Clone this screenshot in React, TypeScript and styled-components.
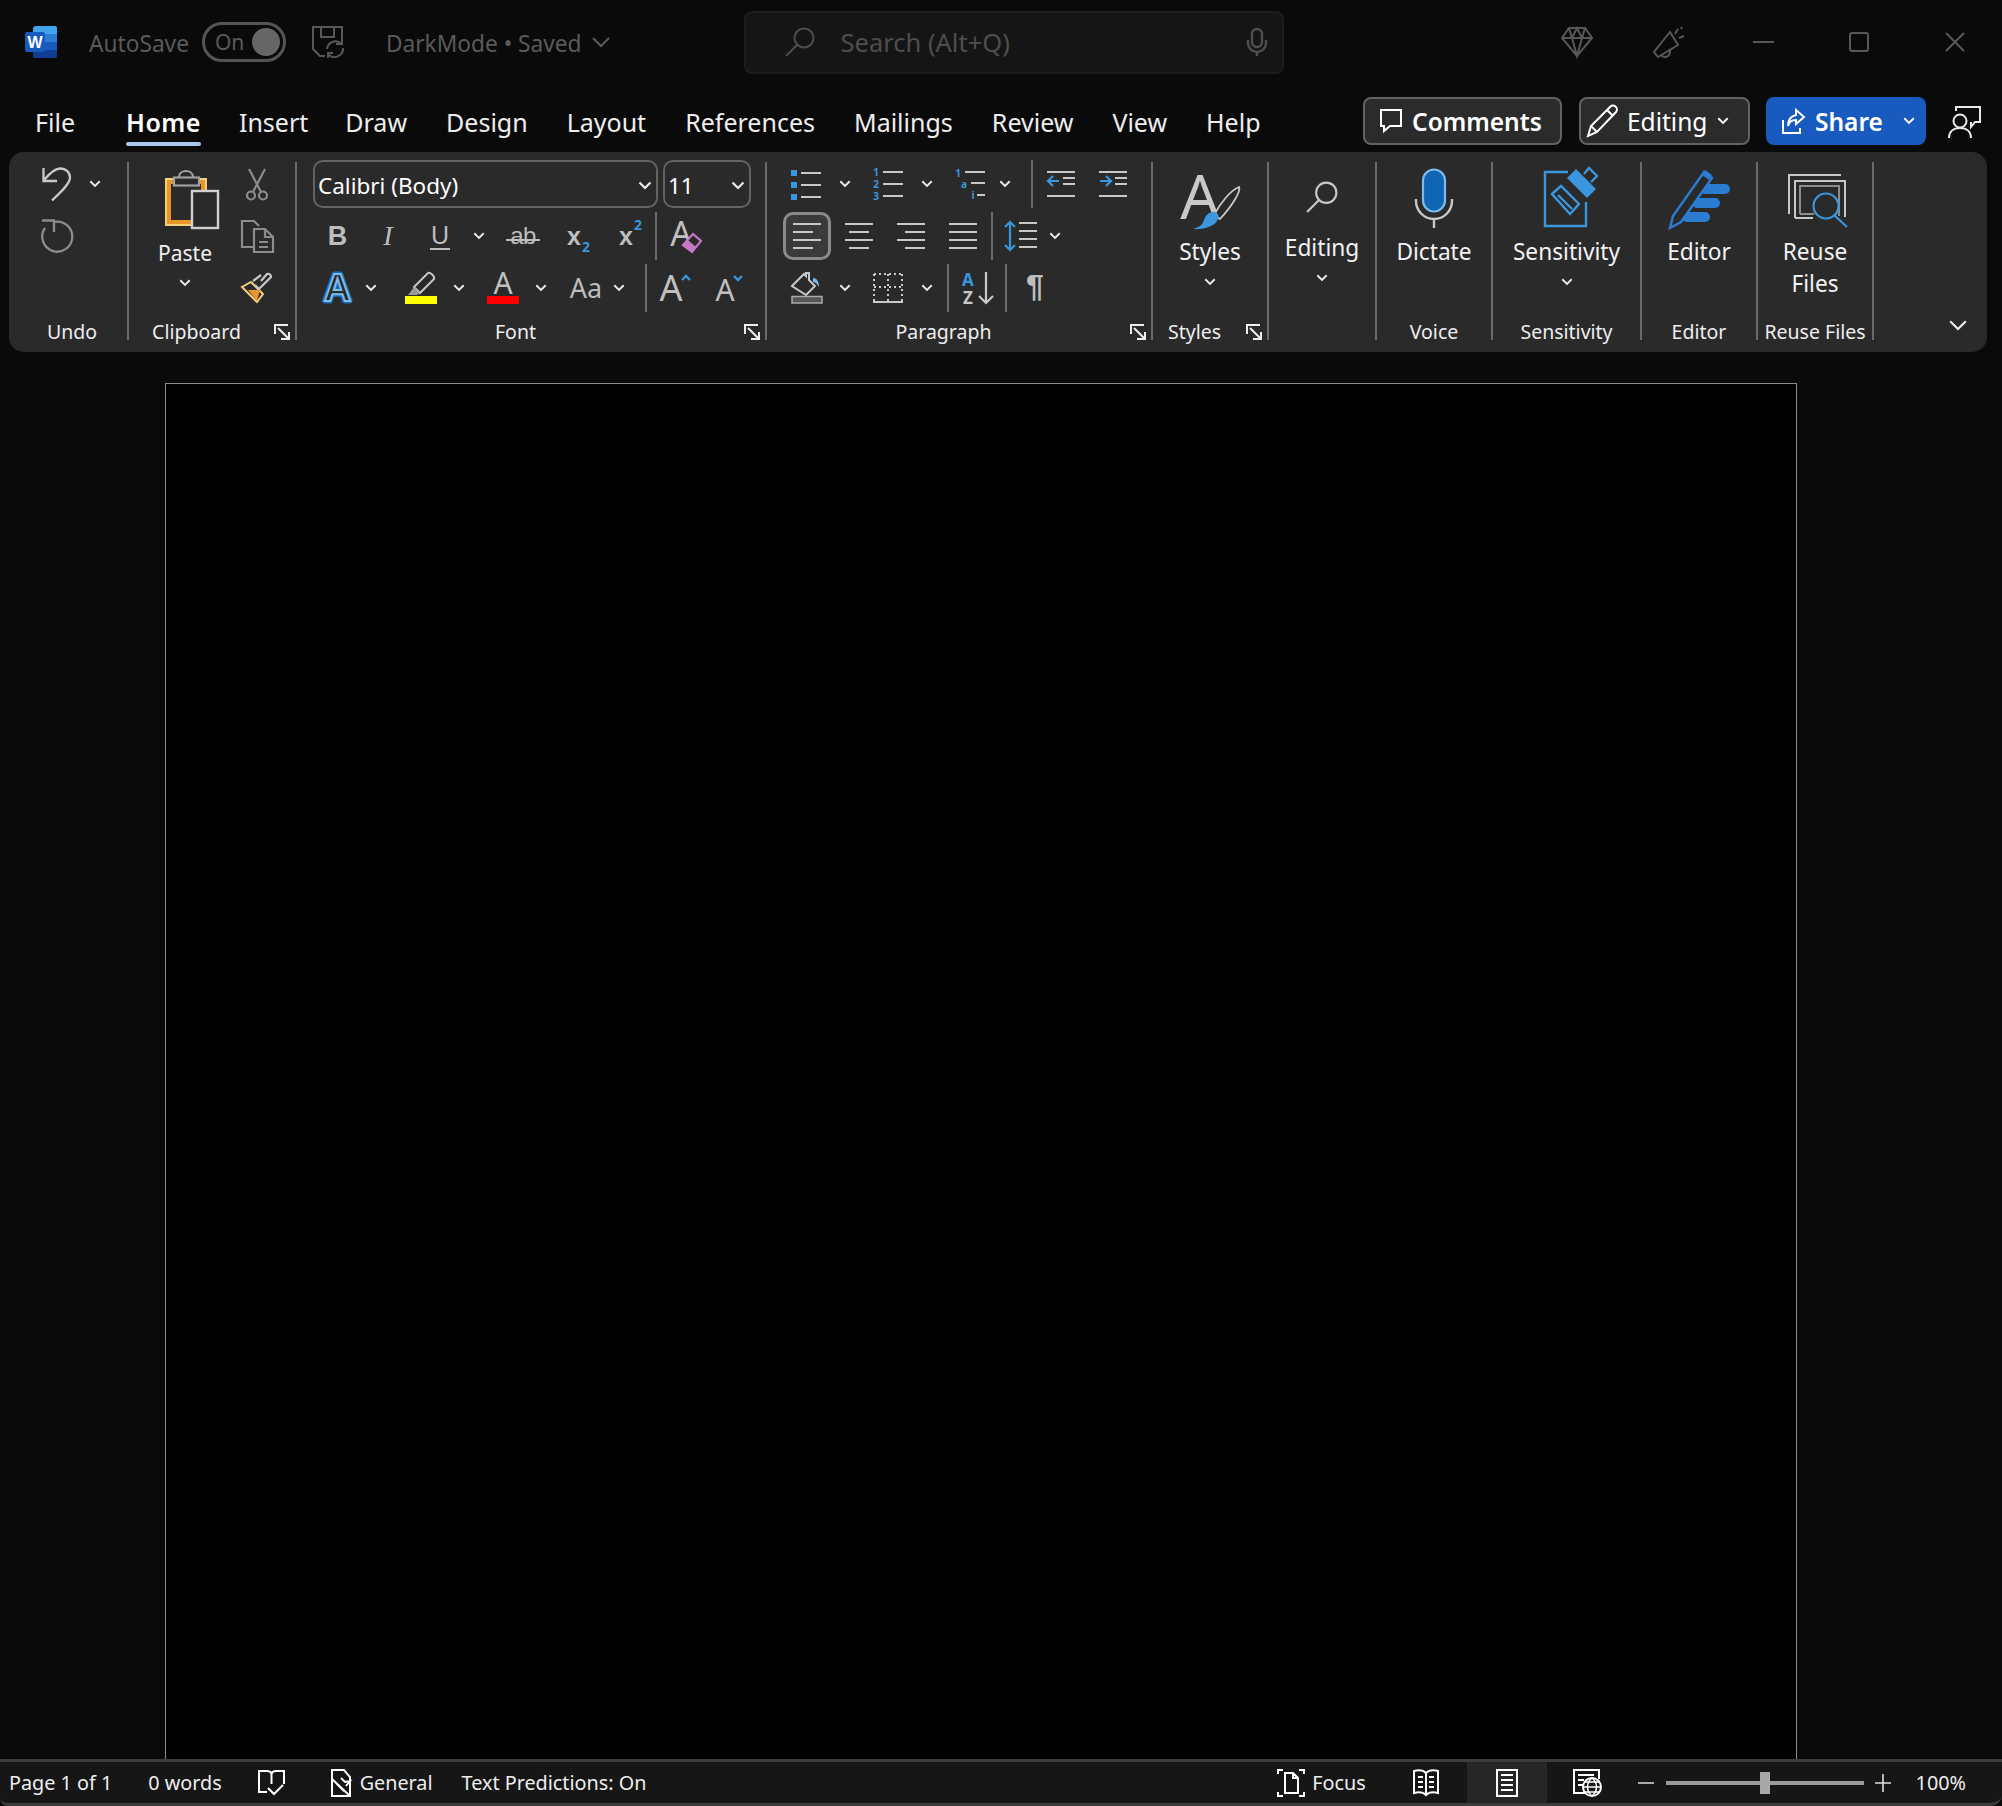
import styled, { createGlobalStyle } from "styled-components";

const GlobalStyle = createGlobalStyle`
  html, body { margin: 0; padding: 0; background: #0a0a0a; }
  #root { height: 1806px; }
  svg { display: block; flex: none; overflow: visible; }
`;

const FONT = `"Noto Sans", "Open Sans", sans-serif`;
const GRAY = "#c8c8c8";
const DIM = "#8c8c8c";
const BLUE = "#3a96dd";
const BG = "#2a2a2a";

const Window = styled.div`
  height: 1806px;
  display: flex;
  flex-direction: column;
  overflow: hidden;
  background: #0a0a0a;
  color: #f0f0f0;
  font-family: ${FONT};
`;

/* title bar */
const TitleBar = styled.div`
  height: 84px;
  flex: none;
  display: flex;
  align-items: center;
  padding-left: 25px;
  color: #5a5a5a;
  font-size: 22.7px;
`;

const Slot = styled.div<{ $ml: number }>`
  margin-left: ${(p) => p.$ml}px;
  display: flex;
  align-items: center;
  flex: none;
`;

const TitleText = styled(Slot)`
  padding-top: 2px;
`;

const Toggle = styled.div`
  margin-left: 13px;
  width: 84px;
  height: 40px;
  box-sizing: border-box;
  border: 3px solid #555;
  border-radius: 20px;
  display: flex;
  align-items: center;
  justify-content: space-between;
  padding: 0 3px 0 10px;
  font-size: 21px;
`;

const Knob = styled.span`
  width: 28px;
  height: 28px;
  border-radius: 50%;
  background: #666;
`;

const SearchBox = styled.div`
  margin-left: 134px;
  width: 540px;
  height: 63px;
  box-sizing: border-box;
  background: #151515;
  border: 2px solid #1d1d1d;
  border-radius: 8px;
  display: flex;
  align-items: center;
  padding: 0 15px 0 39px;
  color: #4e4e4e;
  font-size: 25.5px;
`;

const SearchText = styled.span`
  margin-left: 26px;
  flex: 1;
`;

/* tab row */
const TabRow = styled.div`
  height: 68px;
  flex: none;
  display: flex;
  padding: 13px 21px 0 35px;
  box-sizing: border-box;
`;

const Tab = styled.div<{ $active?: boolean; $mr?: number }>`
  position: relative;
  height: 48px;
  line-height: 50px;
  font-size: 25px;
  font-weight: ${(p) => (p.$active ? 600 : 400)};
  letter-spacing: ${(p) => (p.$active ? "0.5px" : "0")};
  margin-right: ${(p) => p.$mr ?? 39}px;
  color: ${(p) => (p.$active ? "#fff" : "#eee")};
  ${(p) =>
    p.$active &&
    `&::after {
      content: "";
      position: absolute;
      left: 0;
      right: 0;
      bottom: -1px;
      height: 4px;
      border-radius: 2px;
      background: #a9c6ed;
    }`}
`;

const Actions = styled.div`
  margin-left: auto;
  display: flex;
  align-items: center;
  height: 48px;
`;

const ActionButton = styled.div<{ $w: number; $ml: number; $pl: number; $primary?: boolean }>`
  width: ${(p) => p.$w}px;
  height: 48px;
  margin-left: ${(p) => p.$ml}px;
  padding-left: ${(p) => p.$pl}px;
  box-sizing: border-box;
  display: flex;
  align-items: center;
  border-radius: 8px;
  font-size: 24.5px;
  color: #fff;
  background: ${(p) => (p.$primary ? "#185abd" : "#2b2b2b")};
  border: ${(p) => (p.$primary ? "none" : "2px solid #626262")};
`;

const ActionLabel = styled.span<{ $ml: number; $bold?: boolean }>`
  margin-left: ${(p) => p.$ml}px;
  font-weight: ${(p) => (p.$bold ? 600 : 400)};
`;

/* ribbon */
const Ribbon = styled.div`
  margin: 0 15px 0 9px;
  height: 200px;
  flex: none;
  box-sizing: border-box;
  padding-top: 10px;
  background: ${BG};
  border-radius: 15px;
  display: flex;
`;

const Group = styled.section<{ $w: number }>`
  width: ${(p) => p.$w}px;
  height: 178px;
  flex: none;
  box-sizing: border-box;
  border-right: 2px solid #6a6a6a;
  display: flex;
  flex-direction: column;
`;

const GroupBody = styled.div<{ $pl?: number; $center?: boolean }>`
  height: 162px;
  flex: none;
  display: flex;
  padding-left: ${(p) => p.$pl ?? 0}px;
  justify-content: ${(p) => (p.$center ? "center" : "flex-start")};
`;

const GroupFooter = styled.div<{ $pl?: number }>`
  height: 16px;
  display: flex;
  line-height: 16px;
  font-size: 19.5px;
  color: #eee;
  padding-left: ${(p) => p.$pl ?? 0}px;
`;

const GroupLabel = styled.span`
  flex: 1;
  text-align: center;
  white-space: nowrap;
`;

const Launcher = styled.span`
  margin: 0 5px 0 10px;
  width: 16px;
  height: 16px;
`;

const Stack = styled.div`
  margin-top: -2px;
  display: flex;
  flex-direction: column;
  gap: 4px;
`;

const Row = styled.div`
  height: 48px;
  display: flex;
  align-items: center;
`;

const Cell = styled.span<{ $w: number; $ml?: number; $on?: boolean; $pb?: number }>`
  width: ${(p) => p.$w}px;
  height: 48px;
  margin-left: ${(p) => p.$ml ?? 0}px;
  padding-bottom: ${(p) => p.$pb ?? 0}px;
  flex: none;
  box-sizing: border-box;
  display: flex;
  align-items: center;
  justify-content: center;
  ${(p) =>
    p.$on &&
    `background: #3a3a3a;
     border: 3px solid #8a8a8a;
     border-radius: 10px;`}
`;

const Separator = styled.span<{ $ml: number }>`
  margin-left: ${(p) => p.$ml}px;
  width: 2px;
  height: 48px;
  flex: none;
  background: #6a6a6a;
`;

const Select = styled.div<{ $w: number; $ml?: number }>`
  width: ${(p) => p.$w}px;
  height: 48px;
  margin-left: ${(p) => p.$ml ?? 0}px;
  box-sizing: border-box;
  border: 2.5px solid #636363;
  border-radius: 10px;
  display: flex;
  align-items: center;
  justify-content: space-between;
  padding: 2px 4px 0 3px;
  font-size: 22.5px;
  color: #fff;
`;

const Glyph = styled.span<{ $font?: string; $size: number; $bold?: boolean; $italic?: boolean; $color?: string }>`
  position: relative;
  font-family: ${(p) => p.$font ?? `"Liberation Sans", sans-serif`};
  font-size: ${(p) => p.$size}px;
  font-weight: ${(p) => (p.$bold ? 700 : 400)};
  font-style: ${(p) => (p.$italic ? "italic" : "normal")};
  color: ${(p) => p.$color ?? "#bdbdbd"};
  line-height: 1.2;
`;

const UnderlinedGlyph = styled(Glyph)`
  border-bottom: 2px solid #bdbdbd;
  padding: 0 1px;
  line-height: 1.05;
`;

const StruckGlyph = styled(Glyph)`
  letter-spacing: -0.5px;
  &::after {
    content: "";
    position: absolute;
    left: -4px;
    right: -4px;
    top: 17px;
    height: 2px;
    background: #bdbdbd;
  }
`;

const Script = styled.span<{ $sup?: boolean }>`
  position: absolute;
  left: 100%;
  margin-left: 1px;
  ${(p) => (p.$sup ? "top: -4px;" : "bottom: -5px;")}
  font-size: 14px;
  font-weight: 700;
  line-height: 1.2;
  color: ${BLUE};
  font-family: ${FONT};
`;

const Large = styled.div<{ $w?: number }>`
  ${(p) => (p.$w ? `width: ${p.$w}px;` : "")}
  display: flex;
  flex-direction: column;
  align-items: center;
  flex: none;
`;

const LargeIcon = styled.div<{ $h: number; $pl?: number; $pt?: number; $pb?: number }>`
  height: ${(p) => p.$h}px;
  box-sizing: border-box;
  padding: ${(p) => p.$pt ?? 0}px 0 ${(p) => p.$pb ?? 0}px ${(p) => p.$pl ?? 0}px;
  display: flex;
  align-items: center;
  justify-content: center;
`;

const LargeLabel = styled.div<{ $size?: number }>`
  line-height: 32px;
  height: 32px;
  font-size: ${(p) => p.$size ?? 22.7}px;
  color: #f2f2f2;
  white-space: nowrap;
`;

const LargeChevron = styled.div`
  height: 28px;
  display: flex;
  align-items: center;
`;

const CollapseSlot = styled.div`
  flex: 1;
  display: flex;
  justify-content: flex-end;
  padding: 157px 19px 0 0;
`;

/* document */
const Canvas = styled.main`
  flex: 1;
  min-height: 0;
  padding: 31px 0 0 165px;
  display: flex;
`;

const Page = styled.div`
  width: 1632px;
  box-sizing: border-box;
  background: #000;
  border: 1.5px solid #8a8a8a;
  border-bottom: none;
`;

/* status bar */
const StatusBar = styled.footer`
  height: 47px;
  flex: none;
  box-sizing: border-box;
  display: flex;
  align-items: stretch;
  padding-right: 36px;
  background: #161616;
  border-top: 3px solid #3c3c3c;
  border-bottom: 3px solid #3c3c3c;
  border-radius: 0 0 12px 8px;
  font-size: 19.8px;
  color: #eee;
`;

const StatusItem = styled.div<{ $ml?: number; $auto?: boolean; $w?: number; $active?: boolean }>`
  margin-left: ${(p) => (p.$auto ? "auto" : `${p.$ml ?? 0}px`)};
  ${(p) => (p.$w ? `width: ${p.$w}px; justify-content: center;` : "")}
  ${(p) => (p.$active ? "background: #262626;" : "")}
  display: flex;
  align-items: center;
  flex: none;
  white-space: nowrap;
`;

const StatusText = styled.span<{ $ml?: number }>`
  margin-left: ${(p) => p.$ml ?? 0}px;
`;

const Zoom = styled.div`
  margin-left: 12px;
  width: 198px;
  height: 4px;
  background: #9a9a9a;
  display: flex;
  align-items: center;
  padding-left: 94px;
  box-sizing: border-box;
  flex: none;
`;

const ZoomThumb = styled.span`
  width: 10px;
  height: 22px;
  background: #a8a8a8;
  flex: none;
`;

/* icons */
const Chev = ({ c = "#ececec", w = 14, sw = 2.2 }: { c?: string; w?: number; sw?: number }) => (
  <svg width={w} height={(w * 9) / 14} viewBox="0 0 14 9">
    <path d="M1.5 1.5 7 7l5.5-5.5" fill="none" stroke={c} strokeWidth={sw} />
  </svg>
);

const LauncherIcon = () => (
  <Launcher>
    <svg width="16" height="16" viewBox="0 0 16 16" fill="none" stroke="#eee" strokeWidth="2">
      <path d="M1 10V1h13M4 4l10.5 10.5M15 8v7H7" />
    </svg>
  </Launcher>
);

const WordLogo = () => (
  <svg width="32" height="32" viewBox="0 0 32 32">
    <path d="M11 0h19a2 2 0 0 1 2 2v7H8V3a3 3 0 0 1 3-3z" fill="#41a5ee" />
    <rect x="8" y="8" width="24" height="8" fill="#2b7cd3" />
    <rect x="8" y="16" width="24" height="8" fill="#185abd" />
    <path d="M8 24h24v6a2 2 0 0 1-2 2H10a2 2 0 0 1-2-2z" fill="#103f91" />
    <rect x="0" y="6" width="20" height="20" rx="2" fill="#185abd" />
    <text x="10" y="22" textAnchor="middle" fontFamily="Liberation Sans" fontSize="16" fontWeight="700" fill="#fff">W</text>
  </svg>
);

const SaveIcon = () => (
  <svg width="33" height="33" viewBox="0 0 33 33" fill="none" stroke="#585858" strokeWidth="2">
    <path d="M13 30 H8 L1 23 V1 H30 V12 M9 1 V11 H22 V1" />
    <path d="M15 23a8.500 8.500 0 0 1 14-5.500M31 22a8.500 8.500 0 0 1-14 7M30 12v6h-6M16 32v-5h5" />
  </svg>
);

const SearchIcon = ({ c, s }: { c: string; s: number }) => (
  <svg width={s} height={s} viewBox="0 0 30 30" fill="none" stroke={c} strokeWidth="2">
    <circle cx="19" cy="11" r="9.500" />
    <path d="M12 18 1 29" />
  </svg>
);

const SmallMic = () => (
  <svg width="20" height="28" viewBox="0 0 20 28" fill="none" stroke="#4e4e4e" strokeWidth="2.400">
    <rect x="5" y="1" width="10" height="18" rx="5" />
    <path d="M1 12v3a9 9 0 0 0 18 0v-3M10 24v4" />
  </svg>
);

const Diamond = () => (
  <svg width="32" height="30" viewBox="0 0 32 30" fill="none" stroke="#585858" strokeWidth="2">
    <path d="M8 1h16l7 10-15 18L1 11zM1 11h30M11 11l5 18 5-18M8 1l3 10 5-10 5 10 3-10" />
  </svg>
);

const Megaphone = () => (
  <svg width="33" height="32" viewBox="0 0 33 32" fill="none" stroke="#585858" strokeWidth="2">
    <path d="M17 6 1 26l4 5 20-12zM8 29a5 5 0 0 0 8-6M25 3l-3 5M31 10l-5 2M29 1l-1 2" />
  </svg>
);

const WinMin = () => (
  <svg width="21" height="4" viewBox="0 0 21 4"><rect y="1" width="21" height="2" fill="#585858" /></svg>
);
const WinMax = () => (
  <svg width="20" height="20" viewBox="0 0 20 20" fill="none" stroke="#585858" strokeWidth="2"><rect x="1" y="1" width="18" height="18" rx="2" /></svg>
);
const WinClose = () => (
  <svg width="20" height="20" viewBox="0 0 20 20" fill="none" stroke="#585858" strokeWidth="2"><path d="M1 1l18 18M19 1 1 19" /></svg>
);

const CommentIcon = () => (
  <svg width="22" height="24" viewBox="0 0 22 24" fill="none" stroke="#fff" strokeWidth="2">
    <path d="M1 1h20v16H10l-6 5v-5H1z" />
  </svg>
);
const PencilIcon = () => (
  <svg width="32" height="33" viewBox="0 0 32 33" fill="none" stroke="#fff" strokeWidth="2">
    <path d="M2 31 5 21 24 2a3.500 3.500 0 0 1 6 5L11 27zM5 21l6 6M21 5l6 6" />
  </svg>
);
const ShareIcon = () => (
  <svg width="24" height="26" viewBox="0 0 24 26" fill="none" stroke="#fff" strokeWidth="2">
    <path d="M1 12v13h17v-5M14 2l8 7-8 7v-4c-4 0-7 2-8 6 0-7 3-10 8-11z" />
  </svg>
);
const PersonChat = () => (
  <svg width="33" height="33" viewBox="0 0 33 33" fill="none" stroke="#e8e8e8" strokeWidth="2">
    <circle cx="12" cy="16" r="6.500" />
    <path d="M1 33c0-6 4-10 11-10s11 4 11 10M8 6V2h24v15h-5l-4 5v-5" />
  </svg>
);

const UndoIcon = () => (
  <svg width="30" height="34" viewBox="0 0 30 34" fill="none" stroke={GRAY} strokeWidth="2.300">
    <path d="M1.500 1v13H15M2 13C8 6 13 1.500 18 1.500c6 0 10 4 10 9 0 7-12 17-18 23" />
  </svg>
);
const RedoIcon = () => (
  <svg width="33" height="34" viewBox="0 0 33 34" fill="none" stroke={DIM} strokeWidth="2.300">
    <path d="M1 1.500h12V13M13 3a15 15 0 1 1-9 6" />
  </svg>
);

const PasteIcon = () => (
  <svg width="54" height="60" viewBox="0 0 54 60">
    <rect x="0" y="8" width="42" height="48" fill="#f5d07c" />
    <rect x="2" y="10" width="38" height="44" fill="#e8952a" />
    <rect x="6" y="14" width="30" height="36" fill={BG} />
    <rect x="27" y="20" width="27" height="40" fill={BG} />
    <path d="M14 7C14-1 28-1 28 7" fill="none" stroke="#a0a0a0" strokeWidth="2.200" />
    <rect x="9" y="7.500" width="25" height="8" fill={BG} stroke="#a0a0a0" strokeWidth="2.200" />
    <rect x="27" y="21" width="26" height="37" fill={BG} stroke="#d0d0d0" strokeWidth="2.400" />
  </svg>
);
const CutIcon = () => (
  <svg width="22" height="33" viewBox="0 0 22 33" fill="none" stroke={DIM} strokeWidth="2.200">
    <circle cx="5" cy="27.500" r="4" />
    <circle cx="17" cy="27.500" r="4" />
    <path d="M3 1l12 23M19 1 7 24" />
  </svg>
);
const CopyIcon = () => (
  <svg width="33" height="33" viewBox="0 0 33 33" fill="none" stroke={DIM} strokeWidth="2.200">
    <path d="M12 27H1V1h12l5 5" />
    <path d="M13 9h11l8 8v15H13zM24 9v8h8M18 22h9M18 27h9" />
  </svg>
);
const PainterIcon = () => (
  <svg width="32" height="30" viewBox="0 0 32 30">
    <path d="M1 14 10 9l12 12-6 8z" fill="none" stroke="#f5d07c" strokeWidth="2" />
    <path d="M7 17h12l-3 11z" fill="#e8952a" />
    <path d="M12 8 20 2 M14 12l4 4 6-6 6-6a3 3 0 0 0-4-3l-6 7" fill="none" stroke={GRAY} strokeWidth="2.200" />
  </svg>
);

const LetterA = ({ size, y, x, c = "#c0c0c0" }: { size: number; y: number; x: number; c?: string }) => (
  <text x={x} y={y} textAnchor="middle" fontFamily="Noto Sans" fontSize={size} fill={c}>A</text>
);

const ClearFormat = () => (
  <svg width="34" height="34" viewBox="0 0 34 34">
    <LetterA size={34} x={13} y={27} />
    <path d="M15 26 25 15l8 7-9 11z" fill={BG} stroke="#c678c8" strokeWidth="2.200" />
    <path d="M15 26l5-5 8 7-4 5z" fill="#c678c8" />
  </svg>
);
const TextEffects = () => (
  <svg width="33" height="33" viewBox="0 0 33 33">
    <text x="16.500" y="29" textAnchor="middle" fontFamily="Liberation Sans" fontWeight="700" fontSize="38" fill={BG} stroke="#1a6bb4" strokeWidth="5" strokeLinejoin="round">A</text>
    <text x="16.500" y="29" textAnchor="middle" fontFamily="Liberation Sans" fontWeight="700" fontSize="38" fill={BG} stroke="#7cbcec" strokeWidth="2">A</text>
  </svg>
);
const Highlighter = () => (
  <svg width="32" height="32" viewBox="0 0 32 32">
    <path d="M9 15 23 1c2-1 7 3 6 6L15 21z" fill="none" stroke={GRAY} strokeWidth="2" />
    <path d="M9 15l6 6-3 2H3z" fill="#9a9a9a" />
    <rect y="24" width="32" height="8" fill="#ffff00" />
  </svg>
);
const FontColor = () => (
  <svg width="32" height="32" viewBox="0 0 32 32">
    <LetterA size={30} x={16} y={22} />
    <rect y="24" width="32" height="8" fill="#ff0000" />
  </svg>
);
const GrowFont = ({ up }: { up: boolean }) => (
  <svg width={up ? 32 : 28} height="30" viewBox={`0 0 ${up ? 32 : 28} 30`}>
    <LetterA size={up ? 36 : 30} x={up ? 11 : 9} y={28} />
    <path d={up ? "M22 7l4-4 4 4" : "M18 3l4 4 4-4"} fill="none" stroke={BLUE} strokeWidth="2.400" />
  </svg>
);

const Lines = ({ rows }: { rows: [number, number][] }) => (
  <svg width="28" height="28" viewBox="0 0 28 28">
    {rows.map(([x1, x2], i) => (
      <rect key={i} x={x1} y={i * 8 + 1} width={x2 - x1} height="2" fill={GRAY} />
    ))}
  </svg>
);

const BulletList = () => (
  <svg width="30" height="28" viewBox="0 0 30 28">
    {[0, 12, 24].map((y) => (
      <g key={y}>
        <rect x="0" y={y} width="6" height="6" fill={BLUE} />
        <rect x="10" y={y + 2} width="20" height="2" fill={GRAY} />
      </g>
    ))}
  </svg>
);
const NumberList = () => (
  <svg width="30" height="30" viewBox="0 0 30 30">
    {["1", "2", "3"].map((n, i) => (
      <g key={n}>
        <text x="3" y={i * 12 + 7} textAnchor="middle" fontFamily="Noto Sans" fontWeight="700" fontSize="10" fill={BLUE}>{n}</text>
        <rect x="10" y={i * 12 + 2} width="20" height="2" fill={GRAY} />
      </g>
    ))}
  </svg>
);
const MultiList = () => (
  <svg width="30" height="30" viewBox="0 0 30 30">
    <text x="3" y="8" textAnchor="middle" fontFamily="Noto Sans" fontWeight="700" fontSize="10" fill={BLUE}>1</text>
    <rect x="10" y="2" width="20" height="2" fill={GRAY} />
    <text x="9" y="19" textAnchor="middle" fontFamily="Noto Sans" fontWeight="700" fontSize="10" fill={BLUE}>a</text>
    <rect x="16" y="13" width="14" height="2" fill={GRAY} />
    <text x="18" y="30" textAnchor="middle" fontFamily="Noto Sans" fontWeight="700" fontSize="10" fill={BLUE}>i</text>
    <rect x="22" y="25" width="8" height="2" fill={GRAY} />
  </svg>
);
const IndentIcon = ({ out }: { out: boolean }) => (
  <svg width="28" height="26" viewBox="0 0 28 26">
    <rect width="28" height="2" fill={GRAY} />
    <rect x="16" y="6" width="12" height="2" fill={GRAY} />
    <rect x="16" y="12" width="12" height="2" fill={GRAY} />
    <rect y="24" width="28" height="2" fill={GRAY} />
    <path d={out ? "M12 10H1M6 5l-5 5 5 5" : "M1 10h11M7 5l5 5-5 5"} fill="none" stroke={BLUE} strokeWidth="2.200" />
  </svg>
);
const LineSpacing = () => (
  <svg width="32" height="30" viewBox="0 0 32 30">
    <path d="M5 1v28M0 6l5-5 5 5M0 24l5 5 5-5" fill="none" stroke={BLUE} strokeWidth="2.200" />
    {[1, 9, 17, 25].map((y) => (
      <rect key={y} x="14" y={y} width="18" height="2" fill={GRAY} />
    ))}
  </svg>
);
const Shading = () => (
  <svg width="32" height="32" viewBox="0 0 32 32">
    <path d="M1 14 13 2l2 2V1h3v7l6 6-9 9z" fill="none" stroke={GRAY} strokeWidth="2" />
    <path d="M22 6c4 0 6 4 6 9-2-3-3-5-6-5z" fill="#7cbcec" />
    <rect x="1" y="24.500" width="30" height="6.500" fill="#555" stroke="#aaa" strokeWidth="1.500" />
  </svg>
);
const Borders = () => (
  <svg width="30" height="30" viewBox="0 0 30 30" fill="none" stroke={GRAY} strokeWidth="2" strokeDasharray="2 3">
    <path d="M1 1h28M1 14h28M1 1v28M15 1v28M29 1v28" />
    <path d="M0 29h30" strokeDasharray="none" />
  </svg>
);
const SortIcon = () => (
  <svg width="32" height="34" viewBox="0 0 32 34">
    <text x="7" y="15" textAnchor="middle" fontFamily="Noto Sans" fontWeight="700" fontSize="17" fill={BLUE}>A</text>
    <text x="7" y="33" textAnchor="middle" fontFamily="Noto Sans" fontWeight="700" fontSize="17" fill={GRAY}>Z</text>
    <path d="M25 1v31M18 25l7 7 7-7" fill="none" stroke={GRAY} strokeWidth="2.200" />
  </svg>
);

const StylesIcon = () => (
  <svg width="62" height="66" viewBox="0 0 62 66">
    <text x="21" y="53" textAnchor="middle" fontFamily="Noto Sans" fontSize="62" fill={GRAY}>A</text>
    <path d="M35 49C42 36 52 24 60 21c2 4-6 18-19 32z" fill={BG} stroke={GRAY} strokeWidth="1.800" />
    <path d="M36 46c3 1 5 4 2 9-3 5-13 9-24 8 6-2 9-3 11-9 2-6 7-9 11-8z" fill={BLUE} />
  </svg>
);
const BigMic = () => (
  <svg width="38" height="60" viewBox="0 0 38 60">
    <rect x="8" y="1.500" width="22" height="42" rx="11" fill="#0f64b4" stroke="#7cbcec" strokeWidth="2.200" />
    <path d="M1 31v2a18 18 0 0 0 36 0v-2M19 50v10" fill="none" stroke={GRAY} strokeWidth="2.400" />
  </svg>
);
const SensitivityIcon = () => (
  <svg width="54" height="60" viewBox="0 0 54 60" fill="none" stroke={BLUE} strokeWidth="2.400">
    <path d="M24 5H1v54h41V35" />
    <path d="M8 27l9-8 18 18-9 10zM14 28l14 14" />
    <path d="M23 11l9-9 20 20-9 9z" fill={BLUE} stroke="none" />
    <path d="M40 7l5-6 8 8-6 6" />
  </svg>
);
const EditorIcon = () => (
  <svg width="62" height="62" viewBox="0 0 62 62">
    <rect x="32" y="16" width="30" height="10" rx="5" fill="#2b7cd3" />
    <rect x="24" y="30" width="28" height="10" rx="5" fill="#2b7cd3" />
    <rect x="14" y="44" width="28" height="10" rx="5" fill="#2b7cd3" />
    <path d="M2 60l3-12L36 4l8 6-31 44z" fill={BG} stroke="#2b7cd3" strokeWidth="2.400" />
    <path d="M34 7l3-5 7 5-3 5z" fill="#2b7cd3" />
  </svg>
);
const ReuseIcon = () => (
  <svg width="60" height="54" viewBox="0 0 60 54" fill="none">
    <path d="M1 40V1h52" stroke="#c8c8c8" strokeWidth="2" />
    <path d="M7 44V7h50v36" stroke="#c8c8c8" strokeWidth="2" />
    <path d="M12 40V12h39v30M12 40h14" stroke="#8c8c8c" strokeWidth="2" />
    <path d="M7 44h18" stroke="#c8c8c8" strokeWidth="2" />
    <circle cx="38" cy="32" r="12.500" stroke={BLUE} strokeWidth="2.200" />
    <path d="M46 41l13 12" stroke={BLUE} strokeWidth="2.200" />
  </svg>
);

const BookCheck = () => (
  <svg width="27" height="26" viewBox="0 0 27 26" fill="none" stroke="#fff" strokeWidth="2">
    <path d="M9 22H1V1h8c3 0 4 1 4.500 3C14 2 16 1 18 1h8v13M13.500 4v10M10 18l6 6 9-9" />
  </svg>
);
const DocTag = () => (
  <svg width="20" height="28" viewBox="0 0 20 28" fill="none" stroke="#fff" strokeWidth="2">
    <path d="M1 1h12l6 7v19H1zM1 10l18 17M5 14l8 8M10 9l4 4 5-1-4 5" />
  </svg>
);
const FocusIcon = () => (
  <svg width="28" height="28" viewBox="0 0 28 28" fill="none" stroke="#fff" strokeWidth="2">
    <path d="M1 5V1h5M22 1h5v4M1 23v4h5M22 27h5v-4M8 4h8l5 5v15H8zM16 4v5h5" />
  </svg>
);
const ReadIcon = () => (
  <svg width="26" height="28" viewBox="0 0 26 28" fill="none" stroke="#fff" strokeWidth="2">
    <path d="M13 4C10 1 5 1 1 2v22c4-1 9-1 12 2 3-3 8-3 12-2V2c-4-1-9-1-12 2zM13 4v22M5 8h5M5 13h5M5 18h5M16 8h5M16 13h5M16 18h5" />
  </svg>
);
const PrintIcon = () => (
  <svg width="22" height="28" viewBox="0 0 22 28" fill="none" stroke="#fff" strokeWidth="2">
    <rect x="1" y="1" width="20" height="26" />
    <path d="M5 6h12M5 11h12M5 16h12M5 21h12" />
  </svg>
);
const WebIcon = () => (
  <svg width="29" height="28" viewBox="0 0 29 28" fill="none" stroke="#fff" strokeWidth="2">
    <path d="M12 24H1V1h25v9M5 6h16M5 11h6M5 16h5" />
    <circle cx="19" cy="18" r="9" fill="#161616" />
    <path d="M10 18h18M19 9c-6 5-6 13 0 18M19 9c6 5 6 13 0 18M12 13h14M12 23h14" strokeWidth="1.500" />
  </svg>
);
const MinusIcon = () => (
  <svg width="16" height="2" viewBox="0 0 16 2"><rect width="16" height="2" fill="#aaa" /></svg>
);
const PlusIcon = () => (
  <svg width="16" height="20" viewBox="0 0 16 20"><path d="M0 10h16M8 1v18" stroke="#ddd" strokeWidth="1.600" /></svg>
);

const TABS = ["Draw", "Design", "Layout", "References", "Mailings", "Review", "View", "Help"];

export default function App() {
  return (
    <>
      <GlobalStyle />
      <Window>
        <TitleBar>
          <WordLogo />
          <TitleText $ml={32}>AutoSave</TitleText>
          <Toggle>
            On
            <Knob />
          </Toggle>
          <Slot $ml={26}><SaveIcon /></Slot>
          <TitleText $ml={41}>DarkMode • Saved</TitleText>
          <Slot $ml={10}>
            <svg width="18" height="10" viewBox="0 0 18 10" fill="none" stroke="#5a5a5a" strokeWidth="2"><path d="M1 1l8 8 8-8" /></svg>
          </Slot>
          <SearchBox>
            <SearchIcon c="#4e4e4e" s={30} />
            <SearchText>Search (Alt+Q)</SearchText>
            <SmallMic />
          </SearchBox>
          <Slot $ml={277}><Diamond /></Slot>
          <Slot $ml={60}><Megaphone /></Slot>
          <Slot $ml={67}><WinMin /></Slot>
          <Slot $ml={75}><WinMax /></Slot>
          <Slot $ml={76}><WinClose /></Slot>
        </TitleBar>

        <TabRow>
          <Tab $mr={51}>File</Tab>
          <Tab $active $mr={38}>Home</Tab>
          <Tab $mr={37}>Insert</Tab>
          {TABS.map((t) => (
            <Tab key={t}>{t}</Tab>
          ))}
          <Actions>
            <ActionButton $w={199} $ml={0} $pl={15}>
              <CommentIcon />
              <ActionLabel $ml={10} $bold>Comments</ActionLabel>
            </ActionButton>
            <ActionButton $w={171} $ml={17} $pl={5}>
              <PencilIcon />
              <ActionLabel $ml={9}>Editing</ActionLabel>
              <Slot $ml={10}><Chev w={12} c="#fff" /></Slot>
            </ActionButton>
            <ActionButton $w={160} $ml={16} $pl={16} $primary>
              <ShareIcon />
              <ActionLabel $ml={9} $bold>Share</ActionLabel>
              <Slot $ml={20}><Chev w={12} c="#fff" /></Slot>
            </ActionButton>
            <Slot $ml={22}><PersonChat /></Slot>
          </Actions>
        </TabRow>

        <Ribbon>
          <Group $w={120}>
            <GroupBody $pl={21}>
              <Stack>
                <Row>
                  <Cell $w={54}><UndoIcon /></Cell>
                  <Cell $w={22}><Chev w={12} /></Cell>
                </Row>
                <Row>
                  <Cell $w={54}><RedoIcon /></Cell>
                </Row>
              </Stack>
            </GroupBody>
            <GroupFooter $pl={8}><GroupLabel>Undo</GroupLabel></GroupFooter>
          </Group>

          <Group $w={168}>
            <GroupBody>
              <Large $w={112}>
                <LargeIcon $h={75} $pl={14}><PasteIcon /></LargeIcon>
                <LargeLabel $size={21}>Paste</LargeLabel>
                <LargeChevron><Chev w={12} /></LargeChevron>
              </Large>
              <Stack>
                <Cell $w={32}><CutIcon /></Cell>
                <Cell $w={32}><CopyIcon /></Cell>
                <Cell $w={32}><PainterIcon /></Cell>
              </Stack>
            </GroupBody>
            <GroupFooter>
              <GroupLabel>Clipboard</GroupLabel>
              <LauncherIcon />
            </GroupFooter>
          </Group>

          <Group $w={470}>
            <GroupBody $pl={16}>
              <Stack>
                <Row>
                  <Select $w={345}>Calibri (Body)<Chev /></Select>
                  <Select $w={88} $ml={5}>11<Chev /></Select>
                </Row>
                <Row>
                  <Cell $w={49}><Glyph $size={27} $bold>B</Glyph></Cell>
                  <Cell $w={52}><Glyph $size={28} $italic $font={`"Liberation Serif", serif`}>I</Glyph></Cell>
                  <Cell $w={52}><UnderlinedGlyph $size={25}>U</UnderlinedGlyph></Cell>
                  <Cell $w={26}><Chev w={12} /></Cell>
                  <Cell $w={62}><StruckGlyph $size={24}>ab</StruckGlyph></Cell>
                  <Cell $w={40}><Glyph $size={25} $bold>x<Script>2</Script></Glyph></Cell>
                  <Cell $w={40} $ml={12}><Glyph $size={25} $bold>x<Script $sup>2</Script></Glyph></Cell>
                  <Separator $ml={9} />
                  <Cell $w={48} $ml={4}><ClearFormat /></Cell>
                </Row>
                <Row>
                  <Cell $w={49}><TextEffects /></Cell>
                  <Cell $w={18}><Chev w={12} /></Cell>
                  <Cell $w={52} $ml={15}><Highlighter /></Cell>
                  <Cell $w={24}><Chev w={12} /></Cell>
                  <Cell $w={48} $ml={8}><FontColor /></Cell>
                  <Cell $w={28}><Chev w={12} /></Cell>
                  <Cell $w={50} $ml={6}><Glyph $size={27} $font={FONT}>Aa</Glyph></Cell>
                  <Cell $w={16}><Chev w={12} /></Cell>
                  <Separator $ml={18} />
                  <Cell $w={48} $ml={5}><GrowFont up /></Cell>
                  <Cell $w={48} $ml={6}><GrowFont up={false} /></Cell>
                </Row>
              </Stack>
            </GroupBody>
            <GroupFooter>
              <GroupLabel>Font</GroupLabel>
              <LauncherIcon />
            </GroupFooter>
          </Group>

          <Group $w={386}>
            <GroupBody $pl={16}>
              <Stack>
                <Row>
                  <Cell $w={46}><BulletList /></Cell>
                  <Cell $w={32}><Chev w={12} /></Cell>
                  <Cell $w={54}><NumberList /></Cell>
                  <Cell $w={24}><Chev w={12} /></Cell>
                  <Cell $w={46} $ml={8}><MultiList /></Cell>
                  <Cell $w={24}><Chev w={12} /></Cell>
                  <Separator $ml={14} />
                  <Cell $w={48} $ml={4}><IndentIcon out /></Cell>
                  <Cell $w={48} $ml={4}><IndentIcon out={false} /></Cell>
                </Row>
                <Row>
                  <Cell $w={48} $on><Lines rows={[[0, 28], [0, 20], [0, 28], [0, 20]]} /></Cell>
                  <Cell $w={48} $ml={4}><Lines rows={[[0, 28], [4, 24], [0, 28], [4, 24]]} /></Cell>
                  <Cell $w={48} $ml={4}><Lines rows={[[0, 28], [8, 28], [0, 28], [8, 28]]} /></Cell>
                  <Cell $w={48} $ml={4}><Lines rows={[[0, 28], [0, 28], [0, 28], [0, 28]]} /></Cell>
                  <Separator $ml={4} />
                  <Cell $w={48} $ml={4}><LineSpacing /></Cell>
                  <Cell $w={20}><Chev w={12} /></Cell>
                </Row>
                <Row>
                  <Cell $w={48}><Shading /></Cell>
                  <Cell $w={28}><Chev w={12} /></Cell>
                  <Cell $w={58}><Borders /></Cell>
                  <Cell $w={20}><Chev w={12} /></Cell>
                  <Separator $ml={10} />
                  <Cell $w={48} $ml={4}><SortIcon /></Cell>
                  <Separator $ml={4} />
                  <Cell $w={48} $ml={4} $pb={4}><Glyph $size={32} $bold>¶</Glyph></Cell>
                </Row>
              </Stack>
            </GroupBody>
            <GroupFooter>
              <GroupLabel>Paragraph</GroupLabel>
              <LauncherIcon />
            </GroupFooter>
          </Group>

          <Group $w={116}>
            <GroupBody $center>
              <Large>
                <LargeIcon $h={74}><StylesIcon /></LargeIcon>
                <LargeLabel>Styles</LargeLabel>
                <LargeChevron><Chev w={12} /></LargeChevron>
              </Large>
            </GroupBody>
            <GroupFooter>
              <GroupLabel>Styles</GroupLabel>
              <LauncherIcon />
            </GroupFooter>
          </Group>

          <Group $w={108}>
            <GroupBody $center>
              <Large>
                <LargeIcon $h={70}><SearchIcon c={GRAY} s={32} /></LargeIcon>
                <LargeLabel>Editing</LargeLabel>
                <LargeChevron><Chev w={12} /></LargeChevron>
              </Large>
            </GroupBody>
            <GroupFooter />
          </Group>

          <Group $w={116}>
            <GroupBody $center>
              <Large>
                <LargeIcon $h={74} $pb={3}><BigMic /></LargeIcon>
                <LargeLabel>Dictate</LargeLabel>
              </Large>
            </GroupBody>
            <GroupFooter><GroupLabel>Voice</GroupLabel></GroupFooter>
          </Group>

          <Group $w={149}>
            <GroupBody $center>
              <Large>
                <LargeIcon $h={74} $pl={8} $pb={5}><SensitivityIcon /></LargeIcon>
                <LargeLabel>Sensitivity</LargeLabel>
                <LargeChevron><Chev w={12} /></LargeChevron>
              </Large>
            </GroupBody>
            <GroupFooter><GroupLabel>Sensitivity</GroupLabel></GroupFooter>
          </Group>

          <Group $w={116}>
            <GroupBody $center>
              <Large>
                <LargeIcon $h={74}><EditorIcon /></LargeIcon>
                <LargeLabel>Editor</LargeLabel>
              </Large>
            </GroupBody>
            <GroupFooter><GroupLabel>Editor</GroupLabel></GroupFooter>
          </Group>

          <Group $w={116}>
            <GroupBody $center>
              <Large>
                <LargeIcon $h={74} $pl={5} $pt={4}><ReuseIcon /></LargeIcon>
                <LargeLabel>Reuse</LargeLabel>
                <LargeLabel>Files</LargeLabel>
              </Large>
            </GroupBody>
            <GroupFooter><GroupLabel>Reuse Files</GroupLabel></GroupFooter>
          </Group>

          <CollapseSlot>
            <Chev w={20} sw={1.5} />
          </CollapseSlot>
        </Ribbon>

        <Canvas>
          <Page />
        </Canvas>

        <StatusBar>
          <StatusItem $ml={9}>Page 1 of 1</StatusItem>
          <StatusItem $ml={36}>0 words</StatusItem>
          <StatusItem $ml={36}><BookCheck /></StatusItem>
          <StatusItem $ml={46}>
            <DocTag />
            <StatusText $ml={9}>General</StatusText>
          </StatusItem>
          <StatusItem $ml={29}>Text Predictions: On</StatusItem>
          <StatusItem $auto>
            <FocusIcon />
            <StatusText $ml={7}>Focus</StatusText>
          </StatusItem>
          <StatusItem $ml={47}><ReadIcon /></StatusItem>
          <StatusItem $ml={28} $w={80} $active><PrintIcon /></StatusItem>
          <StatusItem $ml={26}><WebIcon /></StatusItem>
          <StatusItem $ml={36}><MinusIcon /></StatusItem>
          <StatusItem><Zoom><ZoomThumb /></Zoom></StatusItem>
          <StatusItem $ml={11}><PlusIcon /></StatusItem>
          <StatusItem $ml={25}>100%</StatusItem>
        </StatusBar>
      </Window>
    </>
  );
}
